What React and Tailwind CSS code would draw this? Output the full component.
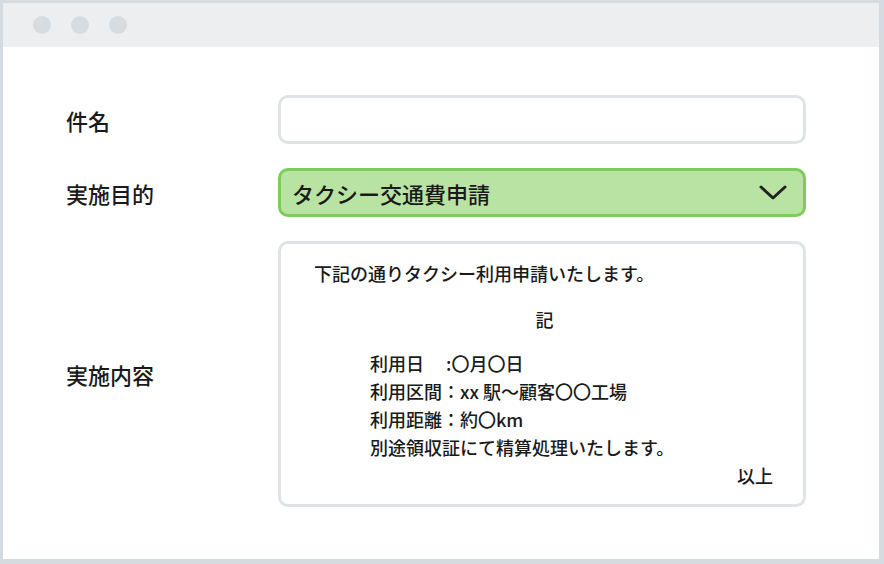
import React from "react";

export default function App() {
  const font = { fontFamily: '"Noto Sans CJK JP", "Noto Sans", sans-serif' };
  return (
    <div className="w-[884px] h-[564px] bg-white" style={font}>
      <div className="w-full h-full border-t-[3px] border-l-[3px] border-r-[5px] border-b-[5px] border-[#d4dce1] flex flex-col">
        <div className="h-[44px] bg-[#eceef0] flex items-center pl-[30px] gap-[20px] shrink-0">
          <div className="w-[18px] h-[18px] rounded-full bg-[#d7dce0]" />
          <div className="w-[18px] h-[18px] rounded-full bg-[#d7dce0]" />
          <div className="w-[18px] h-[18px] rounded-full bg-[#d7dce0]" />
        </div>
        <div className="flex flex-col pt-[48px] pl-[63px] gap-[24px] text-[#1a1a1a]">
          <div className="flex items-center">
            <div className="w-[212px] text-[22px] font-medium leading-none">件名</div>
            <div className="w-[528px] h-[49px] rounded-[10px] border-[3px] border-[#dfe3e6] bg-white" />
          </div>
          <div className="flex items-center">
            <div className="w-[212px] text-[22px] font-medium leading-none">実施目的</div>
            <div className="w-[528px] h-[49px] rounded-[10px] border-[3px] border-[#7ccc5c] bg-[#b9e3a2] flex items-center justify-between pl-[11px] pr-[16px]">
              <span className="text-[22px] font-medium leading-none">タクシー交通費申請</span>
              <svg width="28" height="16" viewBox="0 0 28 16" fill="none">
                <polyline points="2,2 14,13 26,2" stroke="#222" strokeWidth="3" strokeLinecap="round" strokeLinejoin="round" />
              </svg>
            </div>
          </div>
          <div className="flex items-center">
            <div className="w-[212px] text-[22px] font-medium leading-none">実施内容</div>
            <div className="w-[528px] h-[266px] rounded-[10px] border-[3px] border-[#dfe3e6] bg-white pl-[33px] pr-[30px] pt-[15px] text-[18px] font-medium leading-[28px]">
              <div>下記の通りタクシー利用申請いたします。</div>
              <div className="text-center mt-[18px] pl-[2px]">記</div>
              <div className="pl-[56px] mt-[16px]">
                <div>利用日　 :〇月〇日</div>
                <div>利用区間：xx 駅〜顧客〇〇工場</div>
                <div>利用距離：約〇km</div>
                <div>別途領収証にて精算処理いたします。</div>
              </div>
              <div className="text-right">以上</div>
            </div>
          </div>
        </div>
      </div>
    </div>
  );
}
